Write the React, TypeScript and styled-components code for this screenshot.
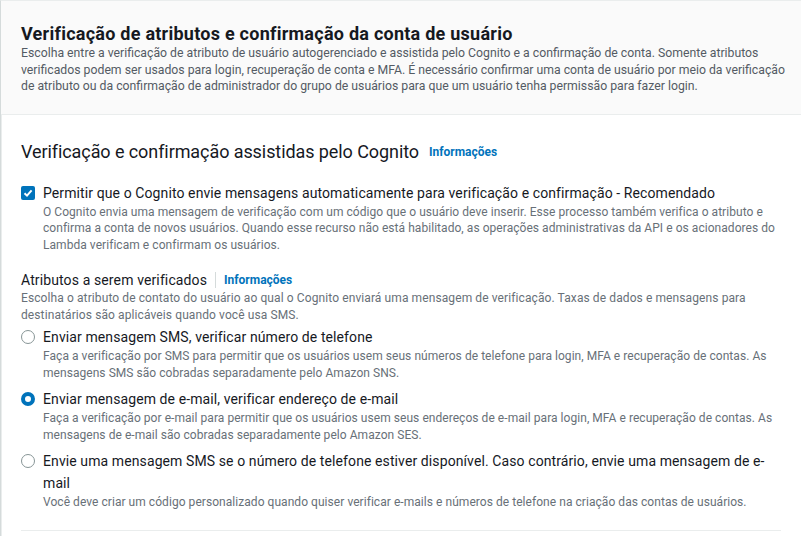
import React from "react"
import styled, { createGlobalStyle } from "styled-components"

const GlobalStyle = createGlobalStyle`
    body {
        margin: 0;
        background: #ffffff;
        font-family: Roboto, "Liberation Sans", sans-serif;
        color: #16191f;
    }
`

const options = [
    {
        id: "sms",
        label: "Enviar mensagem SMS, verificar número de telefone",
        help: "Faça a verificação por SMS para permitir que os usuários usem seus números de telefone para login, MFA e recuperação de contas. As mensagens SMS são cobradas separadamente pelo Amazon SNS.",
    },
    {
        id: "email",
        label: "Enviar mensagem de e-mail, verificar endereço de e-mail",
        help: "Faça a verificação por e-mail para permitir que os usuários usem seus endereços de e-mail para login, MFA e recuperação de contas. As mensagens de e-mail são cobradas separadamente pelo Amazon SES.",
    },
    {
        id: "both",
        label: "Envie uma mensagem SMS se o número de telefone estiver disponível. Caso contrário, envie uma mensagem de e-mail",
        help: "Você deve criar um código personalizado quando quiser verificar e-mails e números de telefone na criação das contas de usuários.",
    },
]

export default function App() {
    const selected = "email"
    return (
        <>
            <GlobalStyle />
            <Container>
                <Header>
                    <Title>Verificação de atributos e confirmação da conta de usuário</Title>
                    <HeaderText>
                        Escolha entre a verificação de atributo de usuário autogerenciado e assistida pelo Cognito e a
                        confirmação de conta. Somente atributos
                        <br />
                        verificados podem ser usados para login, recuperação de conta e MFA. É necessário confirmar uma
                        conta de usuário por meio da verificação
                        <br />
                        de atributo ou da confirmação de administrador do grupo de usuários para que um usuário tenha
                        permissão para fazer login.
                    </HeaderText>
                </Header>
                <Body>
                    <SectionTitle>
                        Verificação e confirmação assistidas pelo Cognito
                        <InfoLink>Informações</InfoLink>
                    </SectionTitle>

                    <Choice>
                        <CheckBox>
                            <svg width="10" height="10" viewBox="0 0 10 10">
                                <path d="M1.5 5.2 L4 7.6 L8.6 2.4" fill="none" stroke="#ffffff" strokeWidth="2" />
                            </svg>
                        </CheckBox>
                        <ChoiceText>
                            <ChoiceLabel>
                                Permitir que o Cognito envie mensagens automaticamente para verificação e confirmação -
                                Recomendado
                            </ChoiceLabel>
                            <Help>
                                O Cognito envia uma mensagem de verificação com um código que o usuário deve inserir. Esse
                                processo também verifica o atributo e confirma a conta de novos usuários. Quando esse recurso
                                não está habilitado, as operações administrativas da API e os acionadores do Lambda verificam
                                e confirmam os usuários.
                            </Help>
                        </ChoiceText>
                    </Choice>

                    <FieldLabel>
                        Atributos a serem verificados
                        <Divider />
                        <InfoLink $tight>Informações</InfoLink>
                    </FieldLabel>
                    <FieldHelp>
                        Escolha o atributo de contato do usuário ao qual o Cognito enviará uma mensagem de verificação.
                        Taxas de dados e mensagens para destinatários são aplicáveis quando você usa SMS.
                    </FieldHelp>

                    <RadioGroup>
                        {options.map((o) => (
                            <Choice key={o.id}>
                                <Radio $checked={o.id === selected} />
                                <ChoiceText>
                                    <ChoiceLabel>{o.label}</ChoiceLabel>
                                    <Help>{o.help}</Help>
                                </ChoiceText>
                            </Choice>
                        ))}
                    </RadioGroup>
                    <Rule />
                </Body>
            </Container>
        </>
    )
}

const Container = styled.div`
    border-top: 1px solid #eaeded;
    border-left: 1px solid #d5dbdb;
    box-shadow: inset 1px 0 0 #eaeded;
    min-height: 536px;
    box-sizing: border-box;
    overflow: hidden;
`
const Header = styled.div`
    background: #fafafa;
    border-bottom: 1px solid #eaeded;
    padding: 22px 0 19px 20px;
`
const Title = styled.h2`
    margin: 0;
    font-size: 18px;
    line-height: 22px;
    font-weight: 700;
    letter-spacing: 0.25px;
    color: #16191f;
`
const HeaderText = styled.p`
    margin: 0;
    font-size: 12.25px;
    line-height: 16.5px;
    white-space: nowrap;
    color: #545b64;
`
const Body = styled.div`
    padding: 26px 20px 0 20px;
`
const SectionTitle = styled.h3`
    margin: 0 0 19px 0;
    font-size: 18px;
    line-height: 22px;
    font-weight: 400;
    letter-spacing: -0.08px;
    color: #16191f;
    display: flex;
    align-items: center;
`
const InfoLink = styled.a<{ $tight?: boolean }>`
    margin-left: ${({ $tight }) => ($tight ? "0" : "10px")};
    font-size: 12px;
    font-weight: 700;
    letter-spacing: 0;
    color: #0073bb;
    cursor: pointer;
`
const Choice = styled.div`
    display: flex;
    align-items: flex-start;
    gap: 8px;
`
const CheckBox = styled.span`
    flex: none;
    width: 14px;
    height: 14px;
    margin-top: 4px;
    border-radius: 2px;
    background: #0073bb;
    display: flex;
    align-items: center;
    justify-content: center;
`
const Radio = styled.span<{ $checked: boolean }>`
    flex: none;
    box-sizing: border-box;
    width: 14px;
    height: 14px;
    margin-top: 4px;
    border-radius: 50%;
    background: #ffffff;
    border: ${({ $checked }) => ($checked ? "4px solid #0073bb" : "1.5px solid #879596")};
`
const ChoiceText = styled.div`
    display: flex;
    flex-direction: column;
`
const ChoiceLabel = styled.div`
    font-size: 14px;
    line-height: 22px;
    letter-spacing: 0.1px;
    color: #16191f;
`
const Help = styled.div`
    font-size: 12px;
    line-height: 16.5px;
    letter-spacing: 0.05px;
    color: #687078;
`
const FieldLabel = styled.div`
    margin-top: 17px;
    font-size: 14px;
    line-height: 20px;
    letter-spacing: 0.12px;
    color: #16191f;
    display: flex;
    align-items: center;
`
const Divider = styled.span`
    width: 1px;
    height: 16px;
    margin: 0 8px;
    background: #d5dbdb;
`
const FieldHelp = styled.div`
    font-size: 12px;
    line-height: 16.5px;
    letter-spacing: 0.1px;
    color: #687078;
`
const RadioGroup = styled.div`
    margin-top: 3px;
    display: flex;
    flex-direction: column;
    gap: 7px;
`
const Rule = styled.div`
    margin-top: 19px;
    height: 1px;
    background: #eaeded;
`
